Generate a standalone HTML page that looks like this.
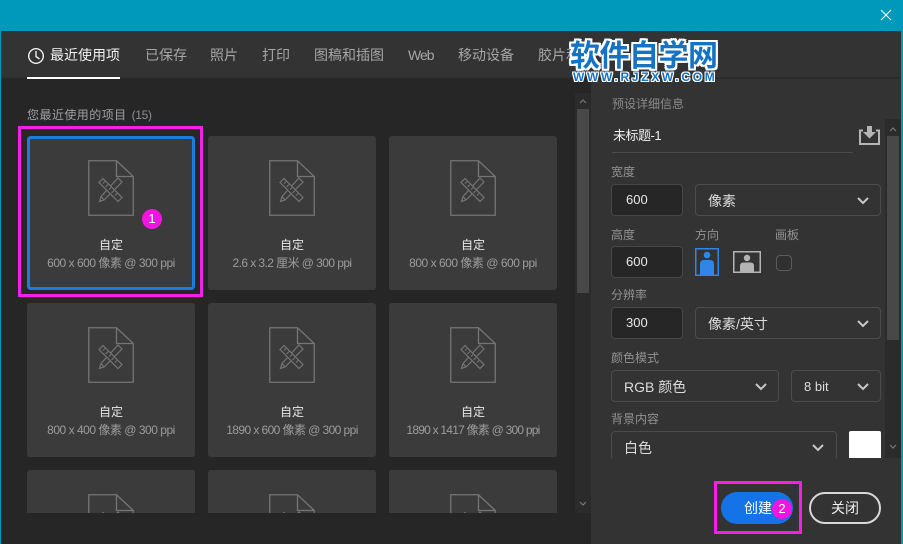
<!DOCTYPE html>
<html lang="zh"><head><meta charset="utf-8"><style>
*{box-sizing:border-box}
html,body{margin:0;padding:0;background:#262626}
#w{position:relative;width:903px;height:544px;overflow:hidden;background:#262626;font-family:"Liberation Sans","Noto Sans CJK SC",sans-serif;font-size:12px;color:#a8a8a8}
.a{position:absolute;white-space:nowrap}
.tab{position:absolute;top:46px;font-size:14px;line-height:18px;color:#a6a6a6;white-space:nowrap}
.card{position:absolute;width:168px;height:154px;background:#3b3b3b;border-radius:3px;overflow:hidden;text-align:center}
.card svg{position:absolute;left:61px;top:24px}
.card .t{position:absolute;left:0;right:0;top:101px;font-size:12px;line-height:16px;color:#e8e8e8}
.card .s{position:absolute;left:0;right:0;top:119px;font-size:12px;line-height:16px;color:#9c9c9c;letter-spacing:-.48px}
.lb{position:absolute;font-size:12px;line-height:14px;color:#929292;white-space:nowrap}
.in{position:absolute;height:32px;background:#262626;border:1px solid #484848;border-radius:4px;color:#e8e8e8;font-size:13px;line-height:30px;padding-left:14px}
.sel{position:absolute;height:32px;border:1px solid #4c4c4c;border-radius:4px;color:#dcdcdc;font-size:14px;line-height:32px;padding-left:12px;white-space:nowrap}
.sel svg{position:absolute;right:10px;top:11px}
</style></head><body><div id="w">

<div class="a" style="left:0;top:0;width:903px;height:31px;background:#0098bb"></div>
<div class="a" style="left:0;top:0;width:1px;height:544px;background:#0098bb"></div>
<div class="a" style="left:901px;top:0;width:2px;height:544px;background:#0098bb"></div>
<svg class="a" style="left:880px;top:9px" width="12" height="12" viewBox="0 0 12 12"><path d="M1 1L11 11M11 1L1 11" stroke="#fff" stroke-width="1.1" fill="none"/></svg>

<div class="a" style="left:1px;top:31px;width:900px;height:46px;background:#333"></div>
<div class="a" style="left:1px;top:77px;width:900px;height:2px;background:#2c2c2c"></div>
<div class="a" style="left:27px;top:77px;width:93px;height:2px;background:#fff"></div>
<svg class="a" style="left:27px;top:47px" width="18" height="18" viewBox="0 0 18 18"><circle cx="9" cy="9" r="7.3" fill="none" stroke="#eee" stroke-width="1.4"/><path d="M9 4V9.5L12.5 12" fill="none" stroke="#eee" stroke-width="1.4"/></svg>
<div class="tab" style="left:50px;color:#f2f2f2">最近使用项</div>
<div class="tab" style="left:145px">已保存</div>
<div class="tab" style="left:210px">照片</div>
<div class="tab" style="left:262px">打印</div>
<div class="tab" style="left:314px">图稿和插图</div>
<div class="tab" style="left:408px;letter-spacing:-1px">Web</div>
<div class="tab" style="left:458px">移动设备</div>
<div class="tab" style="left:538px">胶片和</div>

<div class="a" style="left:591px;top:79px;width:310px;height:465px;background:#333"></div>

<div class="a" style="left:27px;top:107px;font-size:12px;line-height:16px;color:#a0a0a0;letter-spacing:.45px">您最近使用的项目<span style="margin-left:5px;color:#8e8e8e;letter-spacing:-.3px">(15)</span></div>

<div class="a" style="left:575px;top:93px;width:16px;height:420px;background:#2b2b2b"></div>
<div class="a" style="left:577px;top:109px;width:12px;height:184px;background:#484848"></div>
<svg class="a" style="left:579px;top:99px" width="8" height="5" viewBox="0 0 8 5"><path d="M1 4L4 1L7 4" fill="none" stroke="#777" stroke-width="1.2"/></svg>
<svg class="a" style="left:579px;top:501px" width="8" height="5" viewBox="0 0 8 5"><path d="M1 1L4 4L7 1" fill="none" stroke="#777" stroke-width="1.2"/></svg>

<svg width="0" height="0" style="position:absolute"><defs>
<symbol id="doc" viewBox="0 0 46 56"><path d="M.75.75H28.500L45.250 16.500V55.250H.75Z M28.500 .75V16.500H45.250" fill="none" stroke="#757575" stroke-width="1.300"/>
<path d="M30 18L34 22L16 40L11.500 41.500L13 36.500Z M13 36.500L16 40" fill="#3b3b3b" stroke="#757575" stroke-width="1.200"/>
<path d="M15 18.500L11 22.500L30 41.500L34 37.500Z" fill="#3b3b3b" stroke="#757575" stroke-width="1.200"/>
<path d="M17 21.500L15 23.500M20 24.500L17.500 27M23 27.500L21 29.500M26 30.500L23.500 33M29 33.500L27 35.500" fill="none" stroke="#757575" stroke-width="1"/></symbol></defs></svg>

<div class="card" style="left:27px;top:136px"><svg width="46" height="56"><use href="#doc"/></svg><div class="t">自定</div><div class="s">600 x 600 像素 @ 300 ppi</div>
<div class="a" style="left:0;top:0;width:168px;height:154px;border:3px solid #1f7ae0;border-radius:4px"></div></div>
<div class="card" style="left:208px;top:136px"><svg width="46" height="56"><use href="#doc"/></svg><div class="t">自定</div><div class="s" style="letter-spacing:-.57px">2.6 x 3.2 厘米 @ 300 ppi</div></div>
<div class="card" style="left:389px;top:136px"><svg width="46" height="56"><use href="#doc"/></svg><div class="t">自定</div><div class="s">800 x 600 像素 @ 600 ppi</div></div>
<div class="card" style="left:27px;top:303px"><svg width="46" height="56"><use href="#doc"/></svg><div class="t">自定</div><div class="s">800 x 400 像素 @ 300 ppi</div></div>
<div class="card" style="left:208px;top:303px"><svg width="46" height="56"><use href="#doc"/></svg><div class="t">自定</div><div class="s" style="letter-spacing:-.58px">1890 x 600 像素 @ 300 ppi</div></div>
<div class="card" style="left:389px;top:303px"><svg width="46" height="56"><use href="#doc"/></svg><div class="t">自定</div><div class="s" style="letter-spacing:-.77px">1890 x 1417 像素 @ 300 ppi</div></div>
<div class="card" style="left:27px;top:470px;height:43px;border-radius:3px 3px 0 0"><svg width="46" height="56"><use href="#doc"/></svg></div>
<div class="card" style="left:208px;top:470px;height:43px;border-radius:3px 3px 0 0"><svg width="46" height="56"><use href="#doc"/></svg></div>
<div class="card" style="left:389px;top:470px;height:43px;border-radius:3px 3px 0 0"><svg width="46" height="56"><use href="#doc"/></svg></div>

<div class="a" style="left:18px;top:126px;width:185px;height:171px;border:3px solid #f61fe6"></div>
<div class="a" style="left:142px;top:209px;width:20px;height:20px;border-radius:50%;background:#f214e0;color:#fff;font-size:13px;line-height:20px;text-align:center">1</div>

<div class="lb" style="left:612px;top:97px;color:#8a8a8a">预设详细信息</div>
<div class="a" style="left:613px;top:127px;font-size:13px;line-height:18px;color:#f0f0f0;letter-spacing:-.5px">未标题-1</div>
<div class="a" style="left:612px;top:152px;width:241px;height:1px;background:#4a4a4a"></div>
<svg class="a" style="left:859px;top:125px" width="21" height="20" viewBox="0 0 21 20"><path d="M4 5.500H1V19H20V5.500H17" fill="none" stroke="#b5b5b5" stroke-width="2"/><path d="M8 1H13V7H17L10.500 13.500L4 7H8Z" fill="#b5b5b5"/></svg>

<div class="a" style="left:885px;top:119px;width:16px;height:339px;background:#2b2b2b"></div>
<div class="a" style="left:887px;top:136px;width:12px;height:204px;background:#484848"></div>
<svg class="a" style="left:889px;top:127px" width="8" height="5" viewBox="0 0 8 5"><path d="M1 4L4 1L7 4" fill="none" stroke="#777" stroke-width="1.2"/></svg>
<svg class="a" style="left:889px;top:444px" width="8" height="5" viewBox="0 0 8 5"><path d="M1 1L4 4L7 1" fill="none" stroke="#777" stroke-width="1.2"/></svg>

<div class="lb" style="left:611px;top:165px">宽度</div>
<div class="in" style="left:611px;top:184px;width:72px">600</div>
<div class="sel" style="left:695px;top:184px;width:186px">像素<svg width="14" height="9" viewBox="0 0 14 9"><path d="M2 2L7 7L12 2" fill="none" stroke="#c8c8c8" stroke-width="2"/></svg></div>

<div class="lb" style="left:611px;top:228px">高度</div>
<div class="lb" style="left:695px;top:228px">方向</div>
<div class="lb" style="left:775px;top:228px">画板</div>
<div class="in" style="left:611px;top:246px;width:72px">600</div>
<svg class="a" style="left:695px;top:248px" width="24" height="28" viewBox="0 0 24 28"><rect x=".75" y=".75" width="22.500" height="26.500" fill="#333" stroke="#2f86e8" stroke-width="1.500"/><circle cx="12" cy="7" r="3.300" fill="#2f86e8"/><path d="M5 27V16Q5 12 9 12H15Q19 12 19 16V27Z" fill="#2f86e8"/></svg>
<svg class="a" style="left:733px;top:251px" width="28" height="22" viewBox="0 0 28 22"><rect x=".75" y=".75" width="26.500" height="20.500" fill="#333" stroke="#b4b4b4" stroke-width="1.500"/><circle cx="14" cy="7" r="3.200" fill="#b4b4b4"/><path d="M7 21V15Q7 11.500 10.500 11.500H17.500Q21 11.500 21 15V21Z" fill="#b4b4b4"/></svg>
<div class="a" style="left:776px;top:255px;width:16px;height:16px;border:1px solid #5c5c5c;border-radius:4px;background:#303030"></div>

<div class="lb" style="left:611px;top:288px">分辨率</div>
<div class="in" style="left:611px;top:307px;width:72px">300</div>
<div class="sel" style="left:695px;top:307px;width:186px">像素/英寸<svg width="14" height="9" viewBox="0 0 14 9"><path d="M2 2L7 7L12 2" fill="none" stroke="#c8c8c8" stroke-width="2"/></svg></div>

<div class="lb" style="left:611px;top:351px">颜色模式</div>
<div class="sel" style="left:611px;top:370px;width:168px">RGB 颜色<svg width="14" height="9" viewBox="0 0 14 9"><path d="M2 2L7 7L12 2" fill="none" stroke="#c8c8c8" stroke-width="2"/></svg></div>
<div class="sel" style="left:791px;top:370px;width:90px;font-size:13px">8 bit<svg width="14" height="9" viewBox="0 0 14 9"><path d="M2 2L7 7L12 2" fill="none" stroke="#c8c8c8" stroke-width="2"/></svg></div>

<div class="lb" style="left:611px;top:412px">背景内容</div>
<div class="a" style="left:611px;top:431px;width:270px;height:27px;overflow:hidden">
<div class="sel" style="left:0;top:0;width:226px">白色<svg width="14" height="9" viewBox="0 0 14 9" style="right:11px"><path d="M2 2L7 7L12 2" fill="none" stroke="#c8c8c8" stroke-width="2"/></svg></div>
<div class="a" style="left:238px;top:0;width:32px;height:32px;background:#fff;border-radius:2px"></div>
</div>

<div class="a" style="left:714px;top:481px;width:88px;height:53px;border:3px solid #f61fe6"></div>
<div class="a" style="left:721px;top:492px;width:72px;height:32px;border-radius:16px;background:#1473e6;color:#fff;font-size:14px;line-height:32px;padding-left:23px">创建</div>
<div class="a" style="left:772px;top:499px;width:20px;height:20px;border-radius:50%;background:#f214e0;color:#fff;font-size:13px;line-height:20px;text-align:center">2</div>
<div class="a" style="left:809px;top:492px;width:72px;height:32px;border-radius:16px;border:2px solid #d8d8d8;color:#f0f0f0;font-size:14px;line-height:28px;text-align:center">关闭</div>

<div class="a" style="left:570px;top:40px;font-size:30px;line-height:34px;font-weight:bold;color:#1673c4;letter-spacing:-.5px;text-shadow:2px 0 #fff,-2px 0 #fff,0 2px #fff,0 -2px #fff,2px 2px #fff,-2px -2px #fff,2px -2px #fff,-2px 2px #fff">软件自学网</div>
<div class="a" style="left:573px;top:70px;font-size:12px;line-height:14px;font-weight:bold;color:#1673c4;letter-spacing:2.700px;text-shadow:1px 0 #fff,-1px 0 #fff,0 1px #fff,0 -1px #fff,1px 1px #fff,-1px -1px #fff,1px -1px #fff,-1px 1px #fff">WWW.RJZXW.COM</div>

</div></body></html>
